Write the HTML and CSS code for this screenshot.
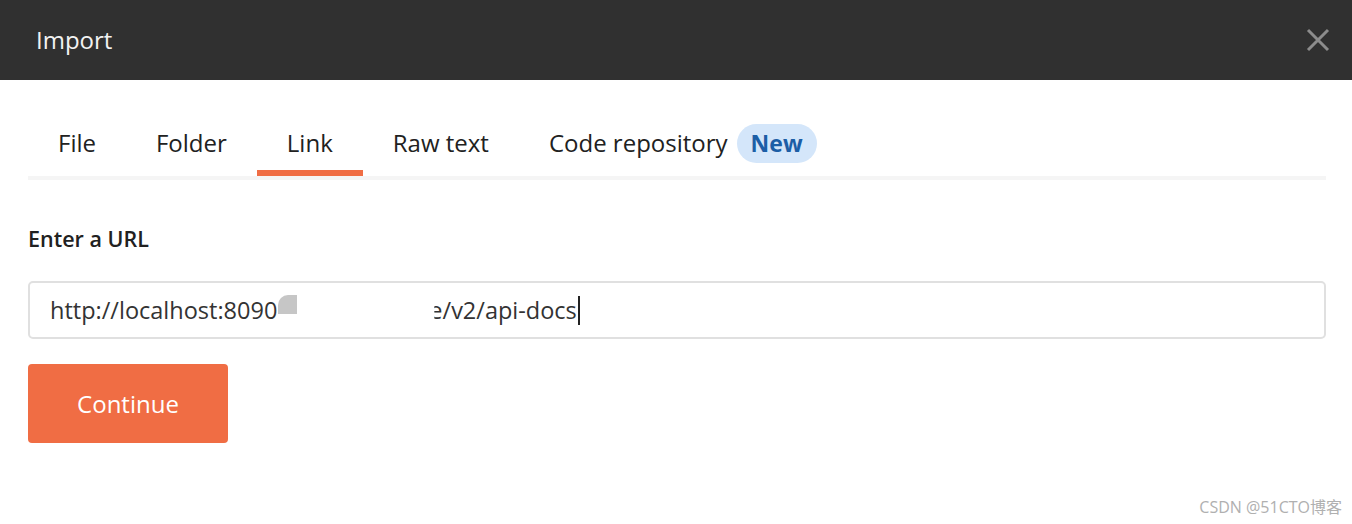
FILE: index.html
```html
<!DOCTYPE html>
<html>
<head>
<meta charset="utf-8">
<title>Import</title>
<link rel="stylesheet" href="styles.css">
</head>
<body>
<div class="modal">
  <header class="modal-header">
    <h1 class="modal-title">Import</h1>
    <button class="close" aria-label="Close">
      <svg width="24" height="24" viewBox="0 0 24 24"><path d="M2 2L22 22M22 2L2 22" stroke="#8c8c8c" stroke-width="3" stroke-linecap="butt" fill="none"/></svg>
    </button>
  </header>
  <div class="modal-body">
    <nav class="tabs">
      <div class="tab">File</div>
      <div class="tab">Folder</div>
      <div class="tab active">Link</div>
      <div class="tab">Raw text</div>
      <div class="tab">Code repository <span class="badge">New</span></div>
    </nav>
    <label class="field-label">Enter a URL</label>
    <div class="url-input">
      <span class="url-text">http://localhost:8090</span><span class="redact"></span><span class="url-tail">e/v2/api-docs</span><span class="caret"></span>
    </div>
    <button class="btn-continue">Continue</button>
  </div>
  <div class="watermark">CSDN @51CTO博客</div>
</div>
</body>
</html>
```

FILE: styles.css
```css
* { box-sizing: border-box; }
html, body { margin: 0; padding: 0; background: #fff; }
body {
  font-family: "Open Sans", "Noto Sans", "Noto Sans CJK SC", sans-serif;
  color: #212121;
  width: 1352px;
  height: 524px;
  overflow: hidden;
}
.modal { position: relative; height: 524px; }
.modal-header {
  height: 80px;
  background: #303030;
  display: flex;
  align-items: center;
  justify-content: space-between;
  padding: 0 22px 0 36px;
}
.modal-title {
  margin: 0;
  font-size: 24px;
  font-weight: 400;
  color: #f2f2f2;
  line-height: 32px;
}
.close {
  background: none;
  border: 0;
  padding: 0;
  width: 24px;
  height: 24px;
  display: block;
}
.close svg { display: block; }
.modal-body { padding: 47px 26px 0 28px; }
.tabs {
  display: flex;
  border-bottom: 4px solid #f5f5f5;
}
.tab {
  display: flex;
  align-items: center;
  height: 49px;
  padding: 0 30px 11px;
  font-size: 24px;
  line-height: 32px;
  color: #212121;
  border-bottom: 6px solid transparent;
  white-space: nowrap;
}
.tab.active { border-bottom-color: #f06d44; }
.badge {
  display: inline-flex;
  align-items: center;
  height: 39px;
  margin-left: 9px;
  padding: 0 14px;
  border-radius: 20px;
  background: #d4e6fa;
  color: #1c5ea6;
  font-weight: 700;
  font-size: 23px;
}
.field-label {
  display: block;
  margin-top: 45px;
  font-size: 21.5px;
  font-weight: 600;
  line-height: 28px;
  color: #212121;
}
.url-input {
  margin-top: 28px;
  height: 58px;
  border: 2px solid #e0e0e0;
  border-radius: 5px;
  padding: 0 20px;
  display: flex;
  align-items: center;
  font-size: 23.5px;
  line-height: 32px;
  color: #333;
}
.redact {
  display: inline-block;
  width: 19px;
  height: 19px;
  background: #c6c6c6;
  border-top-left-radius: 10px;
  margin-top: -12px;
  margin-left: 1px;
}
.url-tail {
  margin-left: 132px;
  clip-path: inset(0 0 0 5px);
}
.caret {
  display: inline-block;
  width: 2px;
  height: 29px;
  background: #222;
  margin-left: 1px;
}
.btn-continue {
  display: block;
  margin-top: 25px;
  width: 200px;
  height: 79px;
  border: 0;
  border-radius: 4px;
  background: #f06d44;
  color: #fff;
  font-family: inherit;
  font-size: 24px;
  padding: 0;
}
.watermark {
  position: absolute;
  right: 10px;
  bottom: 6px;
  font-size: 16px;
  color: #b0b0b0;
  line-height: 22px;
}
```
